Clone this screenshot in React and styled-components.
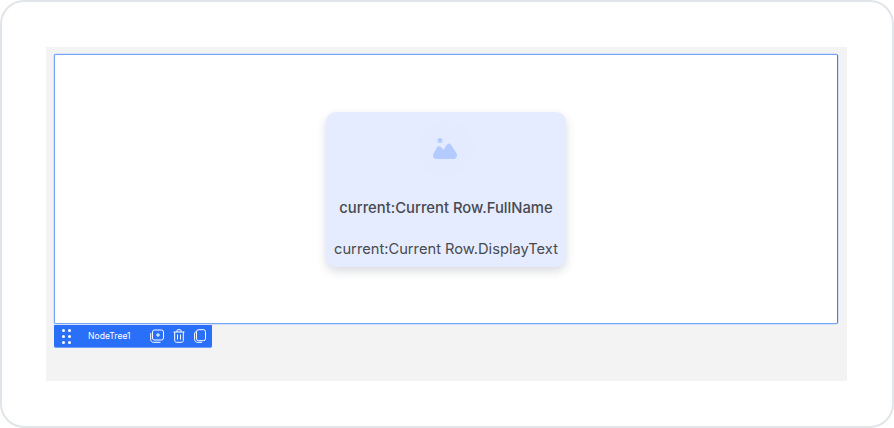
import React from 'react';
import styled, { createGlobalStyle } from 'styled-components';

const GlobalStyle = createGlobalStyle`
	html, body {
		margin: 0;
		padding: 0;
		background: #fff;
	}
`;

const Frame = styled.div`
	box-sizing: border-box;
	width: 894px;
	height: 428px;
	padding: 45px 45px 45px 44px;
	background: #fff;
	border: 2px solid #e1e4e8;
	border-radius: 24px;
	font-family: 'Inter', 'Liberation Sans', sans-serif;
`;

const Panel = styled.div`
	box-sizing: border-box;
	height: 334px;
	padding: 7px 9px 0 8px;
	background: #f3f3f3;
`;

const Canvas = styled.div`
	box-sizing: border-box;
	display: flex;
	align-items: center;
	justify-content: center;
	height: 270px;
	background: #fff;
	border: 1px solid #74a5f6;
	border-right-color: #5f80ad;
	border-radius: 2px;
	box-shadow: 0 0 0 0.5px #b5d0fb;
`;

const Card = styled.div`
	box-sizing: border-box;
	display: flex;
	flex-direction: column;
	align-items: center;
	width: 240px;
	height: 155px;
	padding-top: 9px;
	background: #e6ecff;
	border-radius: 10px;
	box-shadow: 0 4px 10px rgba(60, 70, 100, 0.2);
	color: #484a50;
`;

const IconHalo = styled.div`
	display: flex;
	align-items: center;
	justify-content: center;
	width: 56px;
	height: 56px;
	border-radius: 50%;
	background: #e4ebff;
`;

const Name = styled.div`
	margin-top: 21px;
	font-size: 14.8px;
	line-height: 20px;
	font-weight: 500;
	white-space: nowrap;
`;

const Display = styled.div`
	margin-top: 21px;
	font-size: 14.7px;
	line-height: 20px;
	font-weight: 400;
	white-space: nowrap;
`;

const Toolbar = styled.div`
	box-sizing: border-box;
	display: flex;
	align-items: center;
	width: 158px;
	height: 23px;
	margin-top: 1px;
	padding: 0 0 0 8px;
	background: #2a6ff8;
	border-bottom: 1px solid #6f9ff9;
	border-radius: 0 0 2px 2px;
	color: #fff;
`;

const Grip = styled.div`
	display: grid;
	grid-template-columns: 3px 3px;
	column-gap: 3px;
	row-gap: 3px;
	margin-right: 17px;

	span {
		width: 3px;
		height: 3px;
		border-radius: 50%;
		background: #fff;
	}
`;

const Label = styled.div`
	width: 62px;
	font-size: 8.6px;
	font-weight: 400;
	white-space: nowrap;
`;

const Actions = styled.div`
	display: flex;
	align-items: center;
	gap: 9px;
	color: #fff;

	svg {
		display: block;
	}
`;

const ImageIcon = () => (
	<svg width='28' height='26' viewBox='0 0 28 24'>
		<circle cx='8' cy='3.500' r='2.500' fill='#b3cbff' />
		<path
			d='M1 19c0-1 .2-1.800.7-2.700L5 10.500c1-1.700 3.200-1.800 4.300-.2l2.200 2.600 3.300-5.200c1-1.600 3.200-1.600 4.200 0l5.300 8.400c.5.800.7 1.600.7 2.400 0 2-1.500 3.400-3.400 3.400H4.400C2.500 22 1 20.800 1 19z'
			fill='#b3cbff'
		/>
	</svg>
);

const AddIcon = () => (
	<svg width='14' height='14' viewBox='0 0 14 14' fill='none' stroke='currentColor'>
		<rect x='2.500' y='1' width='11' height='10' rx='2' strokeWidth='1' />
		<path d='M.7 4v6.500c0 1.500 1 2.800 2.800 2.800h7' strokeWidth='1' />
		<path d='M8 4v4M6 6h4' strokeWidth='1' />
	</svg>
);

const TrashIcon = () => (
	<svg width='12' height='14' viewBox='0 0 12 14' fill='none' stroke='currentColor' strokeWidth='1'>
		<path d='M.5 3h11M4 3V1.500c0-.5.300-.8.800-.8h2.400c.5 0 .8.300.8.800V3' />
		<path d='M1.700 3v8.500c0 1 .7 1.800 1.800 1.800h5c1.100 0 1.800-.8 1.800-1.800V3' />
		<path d='M4.500 5.500v5M7.500 5.500v5' />
	</svg>
);

const CopyIcon = () => (
	<svg width='12' height='14' viewBox='0 0 12 14' fill='none' stroke='currentColor' strokeWidth='1'>
		<rect x='2.500' y='.7' width='9' height='11' rx='2' />
		<path d='M2.500 2.500C1.300 2.800.6 3.500.6 5v5.500c0 1.700 1.200 2.800 2.900 2.800h4.500' />
	</svg>
);

const App = () => {
	return (
		<>
			<GlobalStyle />
			<Frame>
				<Panel>
					<Canvas>
						<Card>
							<IconHalo>
								<ImageIcon />
							</IconHalo>
							<Name>current:Current Row.FullName</Name>
							<Display>current:Current Row.DisplayText</Display>
						</Card>
					</Canvas>
					<Toolbar>
						<Grip>
							{[0, 1, 2, 3, 4, 5].map((i) => (
								<span key={i} />
							))}
						</Grip>
						<Label>NodeTree1</Label>
						<Actions>
							<AddIcon />
							<TrashIcon />
							<CopyIcon />
						</Actions>
					</Toolbar>
				</Panel>
			</Frame>
		</>
	);
};

export default App;
